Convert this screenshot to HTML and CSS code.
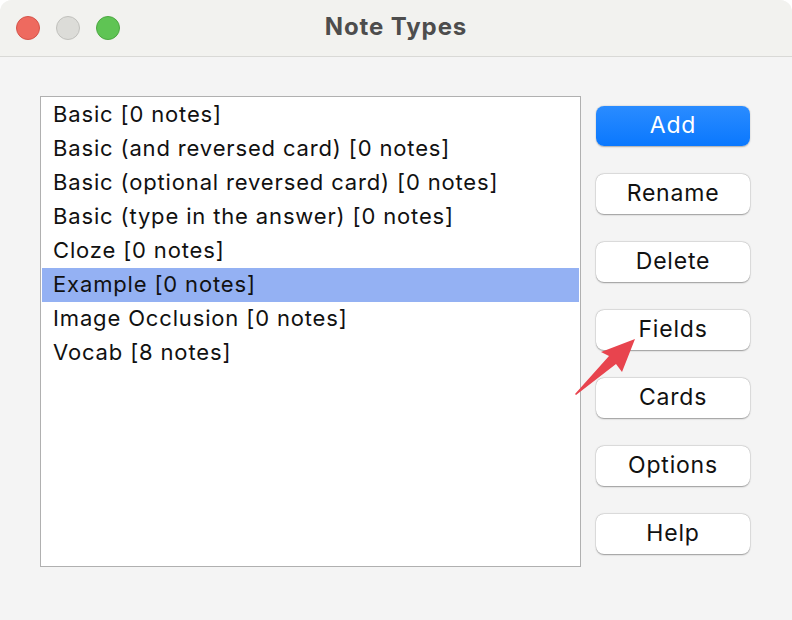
FILE: index.html
```html
<!DOCTYPE html>
<html>
<head>
<meta charset="utf-8">
<link rel="stylesheet" href="styles.css">
</head>
<body>
<div class="window">
  <div class="titlebar">
    <div class="lights">
      <span class="light red"></span>
      <span class="light gray"></span>
      <span class="light green"></span>
    </div>
    <div class="title">Note Types</div>
  </div>
  <div class="content">
    <div class="list">
      <div class="row">Basic [0 notes]</div>
      <div class="row">Basic (and reversed card) [0 notes]</div>
      <div class="row">Basic (optional reversed card) [0 notes]</div>
      <div class="row">Basic (type in the answer) [0 notes]</div>
      <div class="row">Cloze [0 notes]</div>
      <div class="row selected">Example [0 notes]</div>
      <div class="row">Image Occlusion [0 notes]</div>
      <div class="row">Vocab [8 notes]</div>
    </div>
    <div class="buttons">
      <div class="btn primary">Add</div>
      <div class="btn">Rename</div>
      <div class="btn">Delete</div>
      <div class="btn">Fields</div>
      <div class="btn">Cards</div>
      <div class="btn">Options</div>
      <div class="btn">Help</div>
    </div>
  </div>
  <svg class="arrow" width="80" height="70" viewBox="0 0 80 70">
    <polygon points="60,4 47,37 41,29 1,60 0,59 34,21 26,17" fill="#e8444e"/>
  </svg>
</div>
</body>
</html>
```
FILE: styles.css
```css
html, body {
  margin: 0;
  padding: 0;
  background: #ffffff;
}
.window {
  position: relative;
  width: 792px;
  height: 620px;
  background: #f4f4f4;
  border-radius: 12px 12px 0 0;
  overflow: hidden;
  font-family: Inter, "Liberation Sans", Arial, sans-serif;
}
.titlebar {
  height: 56px;
  background: #f2f2ef;
  border-bottom: 1px solid #d9d9d6;
  display: flex;
  align-items: center;
  position: relative;
}
.lights {
  display: flex;
  gap: 16px;
  padding-left: 16px;
}
.light {
  width: 24px;
  height: 24px;
  border-radius: 50%;
  box-sizing: border-box;
}
.red { background: #ee6a5f; border: 1px solid #d5544a; }
.gray { background: #dcdcd8; border: 1px solid #c1c1bd; }
.green { background: #5fc454; border: 1px solid #4ca841; }
.title {
  position: absolute;
  left: 0;
  right: 0;
  top: 0;
  height: 56px;
  line-height: 54px;
  text-align: center;
  font-weight: bold;
  font-size: 24px;
  letter-spacing: 0.9px;
  color: #4d4d4d;
}
.content {
  display: flex;
  padding: 39px 0 0 40px;
}
.list {
  width: 541px;
  height: 471px;
  box-sizing: border-box;
  border: 1px solid #b0b0b0;
  background: #ffffff;
  padding: 1px;
}
.row {
  height: 34px;
  line-height: 33px;
  padding-left: 11px;
  font-size: 22px;
  letter-spacing: 0.85px;
  color: #111;
  white-space: nowrap;
}
.row.selected {
  background: #94b1f3;
}
.buttons {
  display: flex;
  flex-direction: column;
  gap: 28px;
  margin-left: 15px;
  padding-top: 10px;
}
.btn {
  width: 154px;
  height: 40px;
  box-sizing: border-box;
  border-radius: 8px;
  background: #ffffff;
  box-shadow: 0 0.5px 1.5px rgba(0,0,0,0.35), 0 0 0 0.5px rgba(0,0,0,0.08);
  text-align: center;
  line-height: 39px;
  font-size: 23px;
  letter-spacing: 0.8px;
  color: #111;
}
.btn.primary {
  background: linear-gradient(#2a8cff, #0a78fe);
  color: #ffffff;
  box-shadow: 0 0.5px 1.5px rgba(0,0,0,0.3);
}
.arrow {
  position: absolute;
  left: 575px;
  top: 335px;
}
```
